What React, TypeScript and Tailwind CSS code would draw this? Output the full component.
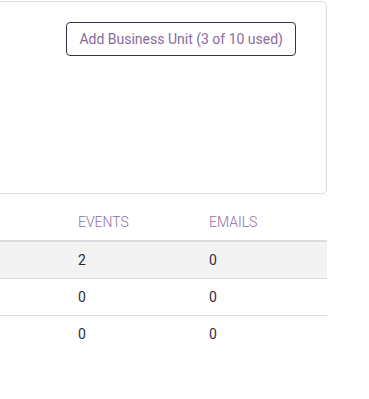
import React from "react";

const rows = [
  { events: 2, emails: 0, highlight: true },
  { events: 0, emails: 0, highlight: false },
  { events: 0, emails: 0, highlight: false },
];

const App: React.FC = () => {
  return (
    <div className="w-[369px] h-[399px] bg-white overflow-hidden font-['Roboto',sans-serif]">
      <div className="ml-[-20px] w-[347px] pt-px">
        {/* card */}
        <div className="h-[193px] border border-[#dcdcdc] rounded-[5px] bg-white flex justify-end items-start pt-[20px] pr-[30px]">
          <button className="h-[34px] px-[12px] border border-[#3d3147] rounded-[4px] text-[14px] text-[#8a6a9e] bg-white">
            Add Business Unit (3 of 10 used)
          </button>
        </div>

        {/* table */}
        <div className="mt-[10px]">
          <div className="flex h-[38px] items-center border-b-2 border-[#dddddd] text-[14px] font-light text-[#8e6fa3]">
            <div className="w-[86px]" />
            <div className="w-[131px] pl-[12px]">EVENTS</div>
            <div className="flex-1 pl-[12px]">EMAILS</div>
          </div>
          {rows.map((r, i) => (
            <div
              key={i}
              className={
                "flex h-[37px] items-center text-[14px] text-[#302a38] " +
                (i < rows.length - 1 ? "border-b border-[#dddddd] " : "") +
                (r.highlight ? "bg-[#f3f3f3]" : "bg-white")
              }
            >
              <div className="w-[86px]" />
              <div className="w-[131px] pl-[12px]">{r.events}</div>
              <div className="flex-1 pl-[12px]">{r.emails}</div>
            </div>
          ))}
        </div>
      </div>
    </div>
  );
};

export default App;
